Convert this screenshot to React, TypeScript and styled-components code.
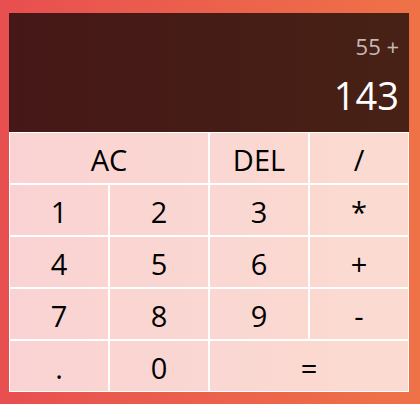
import styled, { createGlobalStyle } from 'styled-components';

const GlobalStyle = createGlobalStyle`
  *, *::before, *::after {
    box-sizing: border-box;
  }
  body {
    margin: 0;
    font-family: 'Open Sans', 'Noto Sans', sans-serif;
  }
`;

const keys: { label: string; span?: number }[] = [
  { label: 'AC', span: 2 },
  { label: 'DEL' },
  { label: '/' },
  { label: '1' },
  { label: '2' },
  { label: '3' },
  { label: '*' },
  { label: '4' },
  { label: '5' },
  { label: '6' },
  { label: '+' },
  { label: '7' },
  { label: '8' },
  { label: '9' },
  { label: '-' },
  { label: '.' },
  { label: '0' },
  { label: '=', span: 2 },
];

function App() {
  return (
    <Page>
      <GlobalStyle />
      <Grid>
        <Output>
          <Previous>55 +</Previous>
          <Current>143</Current>
        </Output>
        {keys.map((key) => (
          <Key key={key.label} $span={key.span ?? 1}>
            {key.label}
          </Key>
        ))}
      </Grid>
    </Page>
  );
}

const Page = styled.div`
  min-height: 100vh;
  display: flex;
  justify-content: center;
  align-items: center;
  padding-right: 2px;
  background: linear-gradient(to right, #e84f50, #ef7247);
`;

const Grid = styled.div`
  display: grid;
  grid-template-columns: repeat(4, 100px);
  grid-template-rows: 119px repeat(5, 52px);
  margin-top: 1px;
`;

const Output = styled.div`
  grid-column: 1 / -1;
  background: rgba(0, 0, 0, 0.7);
  display: flex;
  flex-direction: column;
  align-items: flex-end;
  justify-content: space-around;
  padding: 13px 10px 6px;
  word-wrap: break-word;
  word-break: break-all;
`;

const Previous = styled.div`
  color: rgba(255, 255, 255, 0.7);
  font-size: 22px;
  line-height: 1.2;
`;

const Current = styled.div`
  color: white;
  font-size: 38px;
  line-height: 1.2;
`;

const Key = styled.button<{ $span: number }>`
  grid-column: span ${(p) => p.$span};
  font-family: inherit;
  font-size: 29px;
  color: #000;
  border: 1px solid white;
  outline: none;
  padding: 2px 0 0;
  background: rgba(255, 255, 255, 0.75);
  cursor: pointer;

  &:hover {
    background: rgba(255, 255, 255, 0.9);
  }
`;

export default App;
